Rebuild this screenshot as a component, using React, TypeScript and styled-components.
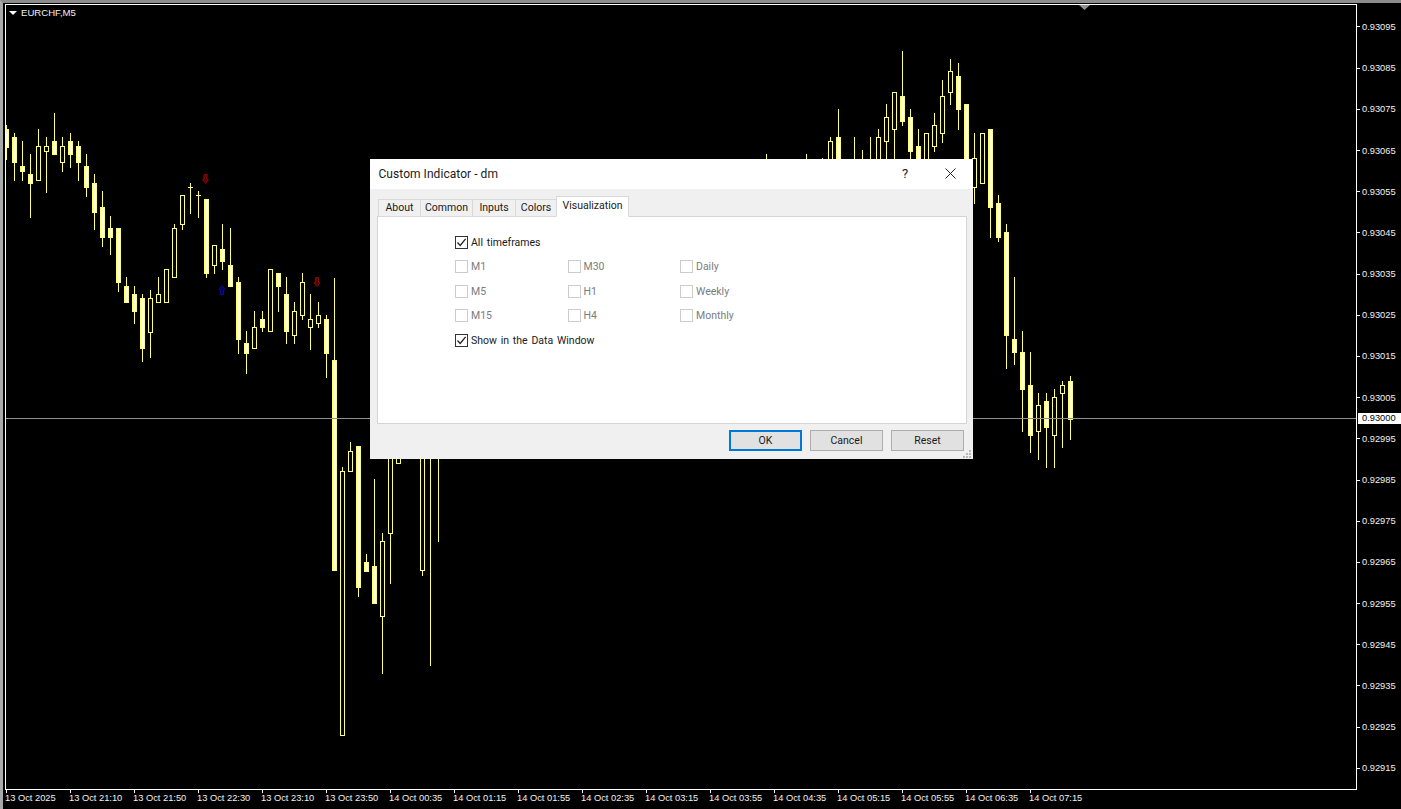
import React from "react";
import styled, { createGlobalStyle } from "styled-components";

const Global = createGlobalStyle`
  html, body { margin: 0; padding: 0; background: #000; overflow: hidden; }
  #root { width: 1401px; height: 809px; }
`;

const Terminal = styled.div`
  position: relative;
  box-sizing: border-box;
  width: 1401px;
  height: 809px;
  background: #000;
  border-top: 3px solid #8c8c8c;
  border-left: 3px solid #a8a8a8;
  padding: 1px 0 0 2px;
  display: grid;
  grid-template-columns: 1352px 44px;
  grid-template-rows: 786px 19px;
  font-family: "Liberation Sans", Arial, sans-serif;
`;

const Plot = styled.div`
  position: relative;
  box-sizing: border-box;
  border: 1px solid #fff;
  overflow: hidden;
`;

const ChartSvg = styled.svg`
  display: block;
  shape-rendering: crispEdges;
`;

const Legend = styled.div`
  position: absolute;
  left: 3px;
  top: 2px;
  display: flex;
  align-items: center;
  gap: 4px;
  font-size: 9.6px;
  line-height: 12px;
  color: #f2f2f2;
`;

const LegendCaret = styled.span`
  width: 0;
  height: 0;
  border-left: 4px solid transparent;
  border-right: 4px solid transparent;
  border-top: 4px solid #fff;
`;

const PriceAxis = styled.div`
  position: relative;
  padding-top: 2.4px;
`;

const PriceRow = styled.div`
  display: flex;
  align-items: center;
  gap: 2px;
  height: 41.2px;
  font-size: 9.3px;
  color: #f2f2f2;
  &::before {
    content: "";
    width: 3px;
    height: 1px;
    background: #fff;
  }
`;

const CurrentPrice = styled.div`
  position: absolute;
  left: 1px;
  right: 0;
  top: 409px;
  height: 11px;
  padding-left: 4px;
  background: #fff;
  color: #000;
  font-size: 9.3px;
  line-height: 11px;
`;

const TimeAxis = styled.div`
  grid-column: 1 / 3;
  display: flex;
  white-space: nowrap;
`;

const TimeCell = styled.div`
  flex: 0 0 64px;
  font-size: 9.3px;
  line-height: 11px;
  color: #f2f2f2;
  &::before {
    content: "";
    display: block;
    width: 1px;
    height: 3px;
    margin-left: 1px;
    background: #fff;
  }
`;

const Dialog = styled.div`
  position: absolute;
  left: 367px;
  top: 156px;
  width: 603px;
  height: 300px;
  display: flex;
  flex-direction: column;
  background: #f0f0f0;
  color: #000;
  font-family: Roboto, "Noto Sans", sans-serif;
  font-size: 10.5px;
  word-spacing: 1.2px;
`;

const TitleBar = styled.div`
  flex: 0 0 30px;
  box-sizing: border-box;
  display: flex;
  align-items: center;
  padding: 0 0 1px 8.5px;
  background: #fff;
  font-size: 12px;
  letter-spacing: 0.05px;
  word-spacing: 0;
  color: #1a1a1a;
`;

const Title = styled.span`
  flex: 1;
`;

const HelpGlyph = styled.span`
  width: 45px;
  padding-right: 1px;
  box-sizing: border-box;
  text-align: center;
  font-size: 13px;
  color: #222;
`;

const CloseButton = styled.span`
  display: flex;
  justify-content: center;
  width: 45px;
`;

const Body = styled.div`
  flex: 1;
  display: flex;
  flex-direction: column;
  padding: 7px 6px 0 7px;
`;

const TabStrip = styled.div`
  display: flex;
  align-items: flex-end;
  height: 21px;
  padding-left: 1px;
  margin-bottom: -1px;
  position: relative;
  z-index: 1;
`;

const Tab = styled.div<{ $active?: boolean; $w: number }>`
  box-sizing: border-box;
  width: ${(p) => p.$w}px;
  height: ${(p) => (p.$active ? 21 : 18)}px;
  padding-top: ${(p) => (p.$active ? 2 : 0)}px;
  padding-bottom: ${(p) => (p.$active ? 0 : 1)}px;
  display: flex;
  align-items: ${(p) => (p.$active ? "flex-start" : "center")};
  justify-content: center;
  background: ${(p) => (p.$active ? "#fff" : "#f0f0f0")};
  border: 1px solid #d9d9d9;
  border-right-width: ${(p) => (p.$active ? 1 : 0)}px;
  border-bottom: ${(p) => (p.$active ? "1px solid #fff" : "1px solid #d9d9d9")};
  color: #1a1a1a;
`;

const Panel = styled.div`
  box-sizing: border-box;
  height: 208px;
  padding: 13px 0 0 77px;
  background: #fff;
  border: 1px solid #d4d4d4;
`;

const Options = styled.div`
  display: grid;
  grid-template-columns: repeat(3, 112.5px);
  grid-auto-rows: 24.5px;
  align-items: center;
`;

const WideOption = styled.div`
  grid-column: 1 / 4;
`;

const Option = styled.label<{ $off?: boolean }>`
  display: flex;
  align-items: center;
  gap: 3px;
  color: ${(p) => (p.$off ? "#7c7c7c" : "#1a1a1a")};
`;

const Box = styled.span<{ $off?: boolean }>`
  box-sizing: border-box;
  width: 13px;
  height: 13px;
  display: flex;
  background: #fff;
  border: 1px solid ${(p) => (p.$off ? "#cccccc" : "#333333")};
`;

const Footer = styled.div`
  display: flex;
  justify-content: flex-end;
  gap: 8px;
  padding: 6px 3px 0 0;
`;

const Btn = styled.div<{ $primary?: boolean }>`
  box-sizing: border-box;
  width: 73px;
  height: 21px;
  padding-bottom: 1px;
  display: flex;
  align-items: center;
  justify-content: center;
  background: #e1e1e1;
  border: ${(p) => (p.$primary ? "2px solid #0078d7" : "1px solid #adadad")};
  color: #1a1a1a;
`;

const GripIcon = styled.svg`
  position: absolute;
  right: 1px;
  bottom: 1px;
`;

type C = [number, number, number, number, number, number];

// x, high, bodyTop, bodyBottom, low, filled
const left3x: C[] = [
  [6, 375, 388, 440, 476, 1], [14, 400, 412, 487, 540, 1], [22, 424, 499, 512, 540, 1], [30, 462, 523, 550, 650, 1],
  [38, 388, 439, 539, 539, 0], [46, 412, 439, 452, 575, 0], [54, 340, 424, 463, 463, 1], [62, 412, 439, 487, 512, 0],
  [70, 400, 424, 463, 500, 1], [78, 424, 439, 487, 540, 1], [86, 462, 499, 562, 587, 1], [94, 523, 550, 637, 686, 1],
  [102, 574, 622, 710, 737, 1], [110, 649, 685, 710, 761, 1], [118, 685, 685, 847, 872, 1], [126, 832, 859, 907, 907, 1],
  [134, 859, 883, 932, 970, 1], [142, 883, 895, 1045, 1082, 1], [150, 871, 895, 995, 1070, 0], [158, 832, 883, 907, 907, 0],
  [166, 808, 808, 907, 907, 0], [174, 673, 685, 832, 832, 0], [182, 586, 586, 673, 686, 0], [190, 550, 562, 562, 638, 0],
  [198, 574, 586, 586, 650, 0], [206, 598, 598, 820, 832, 1], [214, 736, 736, 796, 820, 0], [222, 673, 748, 784, 808, 1],
  [230, 685, 796, 859, 859, 1], [238, 832, 847, 1018, 1058, 1], [246, 994, 1030, 1058, 1118, 1], [254, 932, 982, 1045, 1045, 0],
  [262, 932, 958, 982, 994, 1], [270, 808, 808, 994, 994, 0], [278, 820, 820, 859, 932, 1], [286, 832, 883, 994, 1030, 1],
  [294, 907, 932, 1006, 1030, 0], [302, 820, 847, 946, 958, 0], [310, 883, 958, 982, 1046, 0], [318, 907, 946, 970, 982, 0],
  [326, 946, 958, 1058, 1130, 1],
];

const rest: C[] = [
  [334, 278, 360, 570, 570, 1], [342, 467, 471, 735, 735, 0], [350, 442, 451, 471, 471, 0], [358, 446, 446, 587, 596, 1],
  [366, 554, 562, 571, 571, 1], [374, 479, 566, 603, 603, 1], [382, 533, 541, 616, 673, 0], [390, 430, 440, 533, 583, 0],
  [398, 440, 450, 463, 463, 0], [422, 430, 440, 570, 575, 0], [430, 430, 440, 450, 665, 0], [438, 430, 440, 450, 541, 0],
  [766, 154, 170, 180, 190, 0], [806, 154, 170, 180, 190, 0], [822, 158, 170, 180, 190, 0], [830, 137, 141, 180, 190, 0],
  [838, 109, 137, 180, 190, 1], [854, 137, 170, 180, 190, 0], [862, 150, 170, 180, 190, 0], [870, 137, 170, 180, 190, 0],
  [878, 129, 137, 180, 190, 0], [886, 104, 117, 141, 190, 0], [894, 92, 92, 129, 190, 0], [902, 51, 96, 121, 125, 1],
  [910, 109, 117, 151, 190, 1], [918, 129, 146, 180, 190, 1], [926, 133, 133, 180, 190, 0], [934, 113, 125, 146, 151, 0],
  [942, 80, 96, 133, 142, 0], [950, 59, 71, 92, 104, 0], [958, 63, 76, 109, 129, 1], [966, 104, 104, 180, 190, 1],
  [974, 133, 158, 187, 203, 0], [982, 133, 133, 183, 183, 0], [990, 129, 129, 207, 237, 1], [998, 195, 203, 237, 241, 1],
  [1006, 224, 232, 335, 368, 1], [1014, 277, 339, 352, 364, 1], [1022, 331, 352, 389, 431, 1], [1030, 352, 385, 435, 452, 1],
  [1038, 393, 405, 431, 459, 0], [1046, 393, 401, 427, 467, 1], [1054, 389, 397, 435, 467, 0], [1062, 381, 385, 393, 447, 0],
  [1070, 376, 381, 419, 439, 1],
];

const candles: C[] = [
  ...left3x.map((c) => [c[0], ...c.slice(1, 5).map((v) => Math.round(v / 3)), c[5]] as C),
  ...rest,
];

const WICK = "#ffff78";

function Candle({ c }: { c: C }) {
  const [x, high, top, bot, low, filled] = c;
  return (
    <g>
      <rect x={x} y={high} width={1} height={low - high + 1} fill={WICK} />
      {top === bot ? (
        <rect x={x - 2} y={top} width={5} height={1} fill={WICK} />
      ) : filled ? (
        <>
          <rect x={x - 2} y={top} width={5} height={bot - top + 1} fill="#ffff70" />
          <rect x={x - 1} y={top + 1} width={3} height={Math.max(bot - top - 1, 0)} fill="#ffffe0" />
        </>
      ) : (
        <rect x={x - 1.5} y={top + 0.5} width={4} height={bot - top} fill="#000" stroke={WICK} strokeWidth={1} />
      )}
    </g>
  );
}

const prices = [
  "0.93095", "0.93085", "0.93075", "0.93065", "0.93055", "0.93045", "0.93035", "0.93025", "0.93015", "0.93005",
  "0.92995", "0.92985", "0.92975", "0.92965", "0.92955", "0.92945", "0.92935", "0.92925", "0.92915",
];

const times = [
  "13 Oct 2025", "13 Oct 21:10", "13 Oct 21:50", "13 Oct 22:30", "13 Oct 23:10", "13 Oct 23:50", "14 Oct 00:35",
  "14 Oct 01:15", "14 Oct 01:55", "14 Oct 02:35", "14 Oct 03:15", "14 Oct 03:55", "14 Oct 04:35", "14 Oct 05:15",
  "14 Oct 05:55", "14 Oct 06:35", "14 Oct 07:15",
];

const tabs: [string, number][] = [["About", 42], ["Common", 52], ["Inputs", 43], ["Colors", 41]];

function CheckOption({ label, checked, off }: { label: string; checked?: boolean; off?: boolean }) {
  return (
    <Option $off={off}>
      <Box $off={off}>
        {checked && (
          <svg width="11" height="11" viewBox="0 0 11 11">
            <path d="M1.5 5.5 L4.2 8.4 L9.6 1.8" fill="none" stroke="#222" strokeWidth="1.3" />
          </svg>
        )}
      </Box>
      {label}
    </Option>
  );
}

function ArrowMark({ x, y, color, fill, up }: { x: number; y: number; color: string; fill: string; up?: boolean }) {
  return (
    <path
      transform={`translate(${x} ${y}) scale(1 ${up ? -1 : 1})`}
      d="M-1.5 -4.5 H1.5 V0.5 H3 L0 4.5 L-3 0.5 H-1.5 Z"
      fill={fill}
      stroke={color}
      strokeWidth={0.9}
      style={{ shapeRendering: "auto" }}
    />
  );
}

export default function App() {
  return (
    <>
      <Global />
      <Terminal>
        <Plot>
          <ChartSvg width="1350" height="784" viewBox="6 5 1350 784">
            {candles.map((c) => (
              <Candle key={c[0]} c={c} />
            ))}
            <rect x={6} y={418} width={1350} height={1} fill="#909090" />
            <ArrowMark x={205.5} y={179} color="#8c0c0c" fill="#5a0000" />
            <ArrowMark x={317} y={282} color="#8c0c0c" fill="#5a0000" />
            <ArrowMark x={222} y={290} color="#0c0c90" fill="#000060" up />
            <path d="M1079 5 H1090 L1084.5 10 Z" fill="#909090" style={{ shapeRendering: "auto" }} />
          </ChartSvg>
          <Legend>
            <LegendCaret />
            EURCHF,M5
          </Legend>
        </Plot>
        <PriceAxis>
          {prices.map((p) => (
            <PriceRow key={p}>{p}</PriceRow>
          ))}
          <CurrentPrice>0.93000</CurrentPrice>
        </PriceAxis>
        <TimeAxis>
          {times.map((t) => (
            <TimeCell key={t}>{t}</TimeCell>
          ))}
        </TimeAxis>
        <Dialog>
          <TitleBar>
            <Title>Custom Indicator - dm</Title>
            <HelpGlyph>?</HelpGlyph>
            <CloseButton>
              <svg width="11" height="11" viewBox="0 0 11 11">
                <path d="M0.5 0.5 L10.5 10.5 M10.5 0.5 L0.5 10.5" stroke="#222" strokeWidth="1" />
              </svg>
            </CloseButton>
          </TitleBar>
          <Body>
            <TabStrip>
              {tabs.map(([t, w]) => (
                <Tab key={t} $w={w}>{t}</Tab>
              ))}
              <Tab $active $w={73}>Visualization</Tab>
            </TabStrip>
            <Panel>
              <Options>
                <WideOption><CheckOption label="All timeframes" checked /></WideOption>
                <CheckOption label="M1" off />
                <CheckOption label="M30" off />
                <CheckOption label="Daily" off />
                <CheckOption label="M5" off />
                <CheckOption label="H1" off />
                <CheckOption label="Weekly" off />
                <CheckOption label="M15" off />
                <CheckOption label="H4" off />
                <CheckOption label="Monthly" off />
                <WideOption><CheckOption label="Show in the Data Window" checked /></WideOption>
              </Options>
            </Panel>
            <Footer>
              <Btn $primary>OK</Btn>
              <Btn>Cancel</Btn>
              <Btn>Reset</Btn>
            </Footer>
          </Body>
          <GripIcon width="9" height="8" viewBox="0 0 9 8">
            <g fill="#b8b8b8">
              <rect x="6" y="0" width="2" height="2" />
              <rect x="3" y="3" width="2" height="2" />
              <rect x="6" y="3" width="2" height="2" />
              <rect x="0" y="6" width="2" height="2" />
              <rect x="3" y="6" width="2" height="2" />
              <rect x="6" y="6" width="2" height="2" />
            </g>
          </GripIcon>
        </Dialog>
      </Terminal>
    </>
  );
}
